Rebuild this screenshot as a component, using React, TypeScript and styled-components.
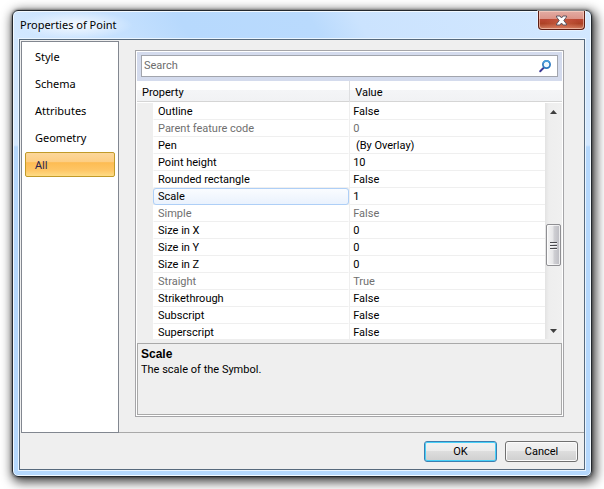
import React, { useState } from "react";
import styled, { createGlobalStyle, css } from "styled-components";

const uiFont = `"Noto Sans", "Open Sans", sans-serif`;
const gridFont = `Roboto, "Liberation Sans", sans-serif`;

const GlobalStyle = createGlobalStyle`
  *, *::before, *::after { box-sizing: border-box; }
  body { margin: 0; background: #fff; color: #000; font: 11px/16px ${gridFont}; }
  button, input { font: inherit; color: inherit; margin: 0; }
`;

const Desktop = styled.main`
  padding: 10px 12px 13px;
  overflow: hidden;
`;

const Window = styled.section`
  border: 1px solid #23282e;
  border-radius: 6px;
  padding: 0 6px 6px;
  background:
    linear-gradient(60deg, #d3e8ff 0, #c4e0fe 20%, #b7d9fd 30%, #b9dafd 52%, #cbe3fe 60%, #d3e8ff 100%) 0 0 / 100% 28px no-repeat,
    linear-gradient(#cfe5fd 0, #d3e8ff 134px, #b5d8fd 136px, #b5d8fd 100%);
  box-shadow:
    inset 0 0 0 1px #f2f9ff,
    0 0 3px rgba(0, 0, 0, 0.6),
    2px 3px 11px 2px rgba(0, 0, 0, 0.75);
`;

const TitleBar = styled.header`
  height: 28px;
  display: flex;
  align-items: flex-start;
  justify-content: space-between;
`;

const Title = styled.h1`
  margin: 0;
  padding: 0 16px 0 1px;
  font: 11px/28px ${uiFont};
  background: radial-gradient(ellipse closest-side, rgba(255, 255, 255, 0.8), rgba(255, 255, 255, 0));
`;

const CloseButton = styled.button`
  width: 47px;
  height: 19px;
  padding: 0;
  display: grid;
  place-items: center;
  border: 1px solid #5c1d14;
  border-top: 0;
  border-radius: 0 0 4px 4px;
  box-shadow: inset 0 0 0 1px rgba(255, 220, 205, 0.55), 0 0 0 1px rgba(255, 255, 255, 0.45);
  background:
    radial-gradient(ellipse at 50% 100%, rgba(225, 120, 90, 0.6), transparent 60%),
    linear-gradient(#e3aca3 0, #dc958a 42%, #bb4733 46%, #ad4226 70%, #cf7f62 100%);
`;

const Client = styled.div`
  border: 1px solid #56697c;
  box-shadow: 0 0 0 1px #eaf5ff;
  background: #efefef;
`;

const Body = styled.div`
  display: grid;
  grid-template-columns: 99px minmax(0, 1fr);
`;

const Nav = styled.nav`
  margin: 1px 0 0 1px;
  padding: 2px 3px;
  display: flex;
  flex-direction: column;
  gap: 2px;
  background: #fff;
  border: 1px solid #828790;
`;

const NavItem = styled.button<{ $active: boolean }>`
  height: 25px;
  padding: 0 9px;
  text-align: left;
  font: 11px/23px ${uiFont};
  border: 1px solid transparent;
  border-radius: 2px;
  background: none;
  ${(p) =>
    p.$active &&
    css`
      color: #2b2350;
      border-color: #c29b29;
      background: linear-gradient(#fcd79b 0, #fdce83 38%, #fdbc53 42%, #fec666 75%, #fedc85 100%);
    `}
`;

const Main = styled.div`
  padding: 10px 20px 15px 16px;
  border-bottom: 1px solid #a9a9a9;
`;

const GridPanel = styled.div`
  padding: 1px;
  border: 1px solid #a5a5a8;
  background: #fff;
`;

const SearchBand = styled.div`
  padding: 3px 4px 4px;
  background: #d4dbed;
`;

const SearchBox = styled.label`
  display: flex;
  align-items: center;
  height: 22px;
  padding: 0 5px 0 2px;
  border: 1px solid #a2a5ad;
  background: #fff;
`;

const SearchInput = styled.input`
  flex: 1;
  min-width: 0;
  padding: 0;
  border: 0;
  outline: 0;
  background: none;
  &::placeholder { color: #6d6d6d; opacity: 1; }
`;

const ListArea = styled.div`
  display: flex;
  height: 262px;
  background: #efefef;
`;

const TableClip = styled.div`
  flex: 1;
  min-width: 0;
  height: 258px;
  overflow: hidden;
`;

const headerFill = css`
  height: 22px;
  border-bottom: 1px solid #fff;
  background: linear-gradient(#fff 9px, #f4f5f7 9px, #f1f2f4 20px, #d5d5d5 20px);
`;

const Table = styled.table`
  width: 100%;
  table-layout: fixed;
  border-collapse: separate;
  border-spacing: 0;
`;

const NameCol = styled.col`
  width: 52%;
`;

const ValueCol = styled.col`
  width: 48%;
`;

const HeadCell = styled.th`
  ${headerFill}
  padding: 3px 4px 0 5px;
  text-align: left;
  font-weight: 400;
  & + & { border-left: 1px solid #dedfe1; padding-left: 5px; }
`;

const Row = styled.tr<{ $muted: boolean }>`
  height: 17px;
  color: ${(p) => (p.$muted ? "#6f6f6f" : "#000")};
  cursor: default;
`;

const NameCell = styled.th`
  height: 17px;
  padding: 0 0 0 16px;
  font-weight: 400;
  text-align: left;
  background: #efefef;
`;

const NameLabel = styled.div<{ $selected: boolean }>`
  height: 17px;
  padding-left: 4px;
  line-height: 16px;
  white-space: nowrap;
  overflow: hidden;
  background: #fff;
  border: 1px solid #fff;
  border-bottom-color: #efefef;
  ${(p) =>
    p.$selected &&
    css`
      border-color: #aecff7;
      border-radius: 3px;
      background: linear-gradient(#fafcff, #eaf2fd);
    `}
`;

const ValueCell = styled.td`
  height: 17px;
  padding: 1px 3px 0;
  line-height: 15px;
  white-space: pre;
  background: #fff;
  border-left: 1px solid #efefef;
  border-bottom: 1px solid #efefef;
`;

const ScrollSide = styled.div`
  width: 17px;
  display: flex;
  flex-direction: column;
`;

const HeaderCap = styled.div`
  ${headerFill}
`;

const ScrollTrack = styled.div`
  height: 236px;
  padding: 0 1px;
  display: flex;
  flex-direction: column;
  background: linear-gradient(90deg, #e3e3e3, #eee 4px, #f0f0f0);
`;

const ScrollArrow = styled.button`
  height: 17px;
  padding: 0;
  display: grid;
  place-items: center;
  border: 0;
  background: none;
`;

const ScrollGap = styled.div<{ $grow: number }>`
  flex: ${(p) => p.$grow} 1 0;
`;

const ScrollThumb = styled.button`
  height: 42px;
  padding: 0;
  display: grid;
  place-items: center;
  border: 1px solid #8f8f93;
  border-radius: 2px;
  box-shadow: inset 0 0 0 1px rgba(255, 255, 255, 0.7);
  background: linear-gradient(90deg, #f6f6f6 0, #e6e6e8 45%, #cfcfd3 55%, #bcbcc2 100%);
`;

const Description = styled.div`
  height: 72px;
  padding: 2px 3px;
  border: 1px solid #a9a9a9;
  background: #efefef;
`;

const DescriptionTitle = styled.h2`
  margin: 0;
  font: bold 12px/16px "Liberation Sans", sans-serif;
`;

const DescriptionText = styled.p`
  margin: 0;
  line-height: 15px;
`;

const Footer = styled.footer`
  display: flex;
  justify-content: flex-end;
  gap: 8px;
  padding: 8px 6px 7px;
`;

const PushButton = styled.button<{ $primary?: boolean }>`
  width: 73px;
  height: 21px;
  padding: 0;
  line-height: 19px;
  border: 1px solid ${(p) => (p.$primary ? "#3c7fb1" : "#707070")};
  border-radius: 3px;
  box-shadow: inset 0 0 0 1px ${(p) => (p.$primary ? "#48d0f8" : "#fbfbfb")};
  background: linear-gradient(#f2f2f2 0, #ebebeb 49%, #dddddd 50%, #cfcfcf 100%);
`;

const sections = ["Style", "Schema", "Attributes", "Geometry", "All"];

type Property = { name: string; value: string; muted?: boolean };

const properties: Property[] = [
  { name: "Outline", value: "False" },
  { name: "Parent feature code", value: "0", muted: true },
  { name: "Pen", value: " (By Overlay)" },
  { name: "Point height", value: "10" },
  { name: "Rounded rectangle", value: "False" },
  { name: "Scale", value: "1" },
  { name: "Simple", value: "False", muted: true },
  { name: "Size in X", value: "0" },
  { name: "Size in Y", value: "0" },
  { name: "Size in Z", value: "0" },
  { name: "Straight", value: "True", muted: true },
  { name: "Strikethrough", value: "False" },
  { name: "Subscript", value: "False" },
  { name: "Superscript", value: "False" },
];

const CloseIcon = () => (
  <svg width="13" height="11" viewBox="0 0 13 11" aria-hidden="true">
    <path
      d="M1.5 1h3.500L6.500 3 8 1h3.500v1L8.800 5.500l2.700 3.500v1H8L6.500 8 5 10H1.500V9l2.700-3.500L1.500 2z"
      fill="#fff"
      stroke="#5c5560"
      strokeWidth="1"
    />
  </svg>
);

const SearchIcon = () => (
  <svg width="14" height="14" viewBox="0 0 14 14" aria-hidden="true">
    <path d="M2.200 12.200L5.800 8.600" stroke="#3c3a96" strokeWidth="2" strokeLinecap="round" />
    <circle cx="8.500" cy="5.500" r="3.600" fill="#eef7fd" stroke="#2a78c0" strokeWidth="1.700" />
    <path d="M5.300 3.900A3.600 3.600 0 0 1 11.500 3.500" stroke="#4a9fdc" strokeWidth="1.700" fill="none" />
  </svg>
);

const ArrowIcon = ({ down = false }: { down?: boolean }) => (
  <svg width="7" height="4" viewBox="0 0 7 4" aria-hidden="true">
    <path d={down ? "M0 0h7L3.500 4z" : "M0 4h7L3.500 0z"} fill="#3f3f3f" />
  </svg>
);

const GripIcon = () => (
  <svg width="8" height="9" viewBox="0 0 8 9" aria-hidden="true">
    <path d="M0 1.500h7M0 4.500h7M0 7.500h7" stroke="#4a4a4e" />
    <path d="M0 2.500h7M0 5.500h7M0 8.500h7" stroke="#f4f4f4" />
  </svg>
);

export default function App() {
  const [section, setSection] = useState("All");
  const [selected, setSelected] = useState("Scale");
  const [query, setQuery] = useState("");

  return (
    <>
      <GlobalStyle />
      <Desktop>
        <Window role="dialog" aria-labelledby="dialog-title">
          <TitleBar>
            <Title id="dialog-title">Properties of Point</Title>
            <CloseButton type="button" aria-label="Close">
              <CloseIcon />
            </CloseButton>
          </TitleBar>
          <Client>
            <Body>
              <Nav aria-label="Property groups">
                {sections.map((name) => (
                  <NavItem key={name} type="button" $active={name === section} onClick={() => setSection(name)}>
                    {name}
                  </NavItem>
                ))}
              </Nav>
              <Main>
                <GridPanel>
                  <SearchBand>
                    <SearchBox>
                      <SearchInput
                        type="text"
                        placeholder="Search"
                        aria-label="Search"
                        value={query}
                        onChange={(e) => setQuery(e.target.value)}
                      />
                      <SearchIcon />
                    </SearchBox>
                  </SearchBand>
                  <ListArea>
                    <TableClip>
                      <Table>
                        <colgroup>
                          <NameCol />
                          <ValueCol />
                        </colgroup>
                        <thead>
                          <tr>
                            <HeadCell scope="col">Property</HeadCell>
                            <HeadCell scope="col">Value</HeadCell>
                          </tr>
                        </thead>
                        <tbody>
                          {properties.map((p) => (
                            <Row key={p.name} $muted={!!p.muted} onClick={() => setSelected(p.name)}>
                              <NameCell scope="row">
                                <NameLabel $selected={p.name === selected}>{p.name}</NameLabel>
                              </NameCell>
                              <ValueCell>{p.value}</ValueCell>
                            </Row>
                          ))}
                        </tbody>
                      </Table>
                    </TableClip>
                    <ScrollSide>
                      <HeaderCap />
                      <ScrollTrack>
                        <ScrollArrow type="button" aria-label="Scroll up">
                          <ArrowIcon />
                        </ScrollArrow>
                        <ScrollGap $grow={104} />
                        <ScrollThumb type="button" aria-label="Scroll position">
                          <GripIcon />
                        </ScrollThumb>
                        <ScrollGap $grow={56} />
                        <ScrollArrow type="button" aria-label="Scroll down">
                          <ArrowIcon down />
                        </ScrollArrow>
                      </ScrollTrack>
                    </ScrollSide>
                  </ListArea>
                  <Description>
                    <DescriptionTitle>Scale</DescriptionTitle>
                    <DescriptionText>The scale of the Symbol.</DescriptionText>
                  </Description>
                </GridPanel>
              </Main>
            </Body>
            <Footer>
              <PushButton type="button" $primary>
                OK
              </PushButton>
              <PushButton type="button">Cancel</PushButton>
            </Footer>
          </Client>
        </Window>
      </Desktop>
    </>
  );
}
